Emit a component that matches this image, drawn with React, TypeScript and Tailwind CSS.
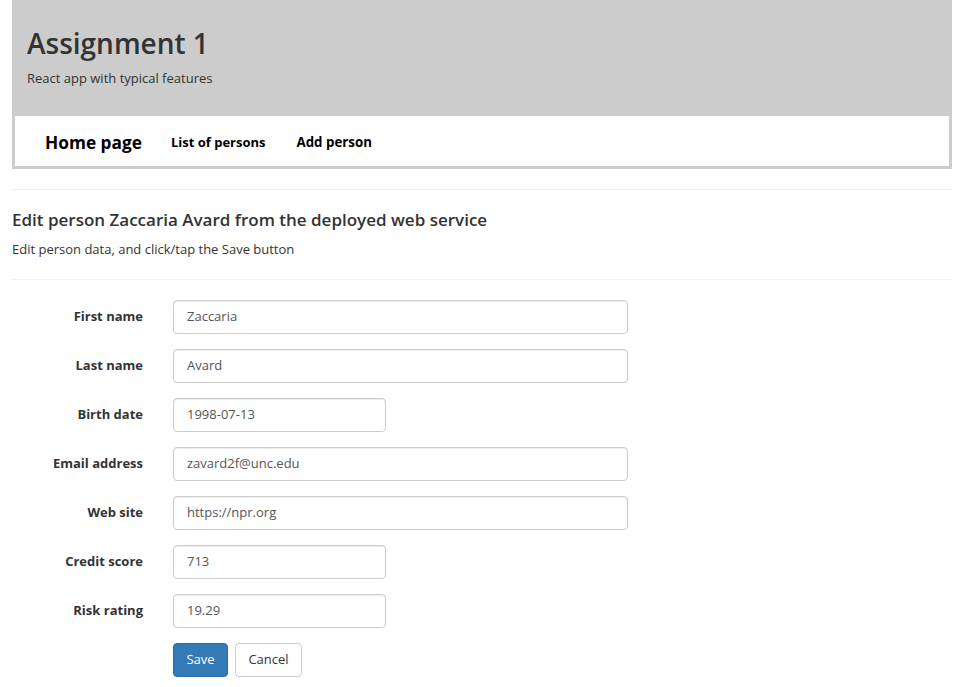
import React from "react";

const font = { fontFamily: '"Open Sans", "Noto Sans", sans-serif' };

function Row({ label, value, wide }: { label: string; value: string; wide?: boolean }) {
  return (
    <div className="flex items-center h-[34px] mb-[15px]">
      <label className="w-[131px] text-right font-bold text-[13px] text-[#333]">{label}</label>
      <div className="ml-[30px]">
        <div
          className={`${wide ? "w-[455px]" : "w-[213px]"} h-[34px] border border-[#ccc] rounded-[4px] bg-white flex items-center pl-[13px] text-[13px] text-[#555] shadow-[inset_0_1px_1px_rgba(0,0,0,0.075)]`}
        >
          {value}
        </div>
      </div>
    </div>
  );
}

export default function App() {
  return (
    <div className="bg-white min-h-[687px] text-[#333]" style={font}>
      <div className="ml-[12px] w-[940px]">
        <div className="bg-[#cccccc] px-[3px] pb-[3px]">
          <div className="h-[116px] pl-[12px] pt-[24px]">
            <h1 className="text-[28px] font-semibold leading-[38px] text-[#333]">Assignment 1</h1>
            <p className="text-[13px] mt-[7px] leading-[18px]">React app with typical features</p>
          </div>
          <div className="h-[50px] bg-white flex items-center pt-[3px] text-black font-bold">
            <span className="pl-[30px] text-[17.3px]">Home page</span>
            <span className="ml-[29px] text-[13px]">List of persons</span>
            <span className="ml-[31px] text-[13.3px]">Add person</span>
          </div>
        </div>
        <div className="mt-[20px] border-t border-[#eee]" />
        <h3 className="mt-[19px] text-[17px] font-semibold leading-[22px]">
          Edit person Zaccaria Avard from the deployed web service
        </h3>
        <p className="mt-[9px] text-[13px] leading-[18px]">Edit person data, and click/tap the Save button</p>
        <div className="mt-[21px] border-t border-[#eee]" />
        <div className="mt-[20px]">
          <Row label="First name" value="Zaccaria" wide />
          <Row label="Last name" value="Avard" wide />
          <Row label="Birth date" value="1998-07-13" />
          <Row label="Email address" value="zavard2f@unc.edu" wide />
          <Row label="Web site" value="https://npr.org" wide />
          <Row label="Credit score" value="713" />
          <Row label="Risk rating" value="19.29" />
          <div className="flex ml-[161px] gap-[7px]">
            <button className="h-[34px] w-[55px] rounded-[4px] bg-[#337ab7] border border-[#2e6da4] text-white text-[13px]">
              Save
            </button>
            <button className="h-[34px] w-[67px] rounded-[4px] bg-white border border-[#ccc] text-[#333] text-[13px]">
              Cancel
            </button>
          </div>
        </div>
      </div>
    </div>
  );
}
